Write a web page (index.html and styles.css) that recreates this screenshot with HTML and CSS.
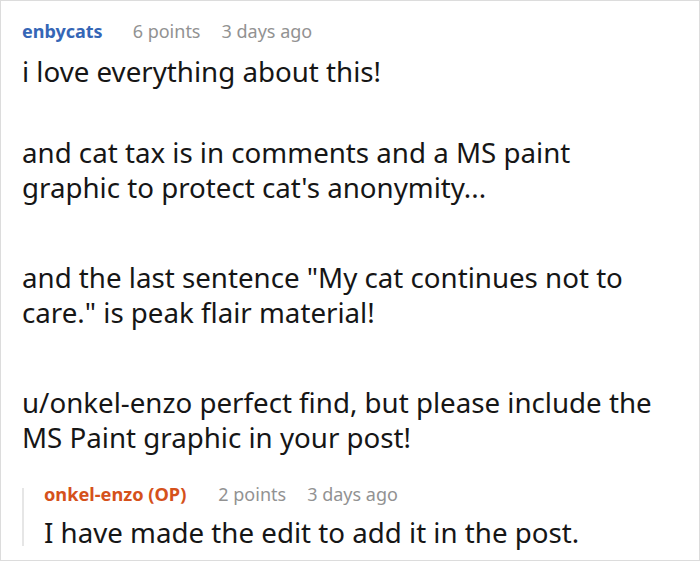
FILE: index.html
```html
<!DOCTYPE html>
<html>
<head>
<meta charset="utf-8">
<link rel="stylesheet" href="styles.css">
</head>
<body>
<div class="frame">
  <div class="comment">
    <div class="meta">
      <span class="author">enbycats</span>
      <span class="score">6 points</span>
      <span class="time">3 days ago</span>
    </div>
    <div class="body">
      <p class="first">i love everything about this!</p>
      <p class="second">and cat tax is in comments and a MS paint<br>graphic to protect cat's anonymity...</p>
      <p>and the last sentence "My cat continues not to<br>care." is peak flair material!</p>
      <p>u/onkel-enzo perfect find, but please include the<br>MS Paint graphic in your post!</p>
    </div>
    <div class="reply">
      <div class="meta">
        <span class="author op">onkel-enzo (OP)</span>
        <span class="score">2 points</span>
        <span class="time">3 days ago</span>
      </div>
      <div class="body">
        <p class="last">I have made the edit to add it in the post.</p>
      </div>
    </div>
  </div>
</div>
</body>
</html>
```

FILE: styles.css
```css
html, body {
  margin: 0;
  padding: 0;
  background: #ffffff;
}
.frame {
  box-sizing: border-box;
  width: 700px;
  height: 561px;
  border: 1px solid #dcdcdc;
  background: #ffffff;
  font-family: "Noto Sans", "Open Sans", sans-serif;
  overflow: hidden;
}
.comment {
  padding: 18px 20px 0 21px;
}
.meta {
  display: flex;
  align-items: baseline;
  font-size: 18px;
  line-height: 24px;
  color: #929292;
}
.author {
  font-weight: 700;
  color: #3566b6;
  margin-right: 30px;
}
.author.op {
  color: #d5511b;
  font-size: 18.2px;
  margin-right: 32px;
}
.score {
  margin-right: 21px;
}
.body {
  margin-top: 11px;
  font-size: 27.7px;
  line-height: 35.5px;
  color: #161616;
}
.body p {
  margin: 54px 0 0 0;
}
.body p.first {
  margin-top: 0;
}
.body p.second {
  margin-top: 45px;
}
.reply {
  margin-top: 32px;
  border-left: 2px solid #e6e6e6;
  padding-left: 20px;
}
.reply .meta {
  line-height: 12px;
}
.reply .body {
  margin-top: 18px;
  line-height: 28px;
}
.body p.last {
  margin-top: 0;
}
```
